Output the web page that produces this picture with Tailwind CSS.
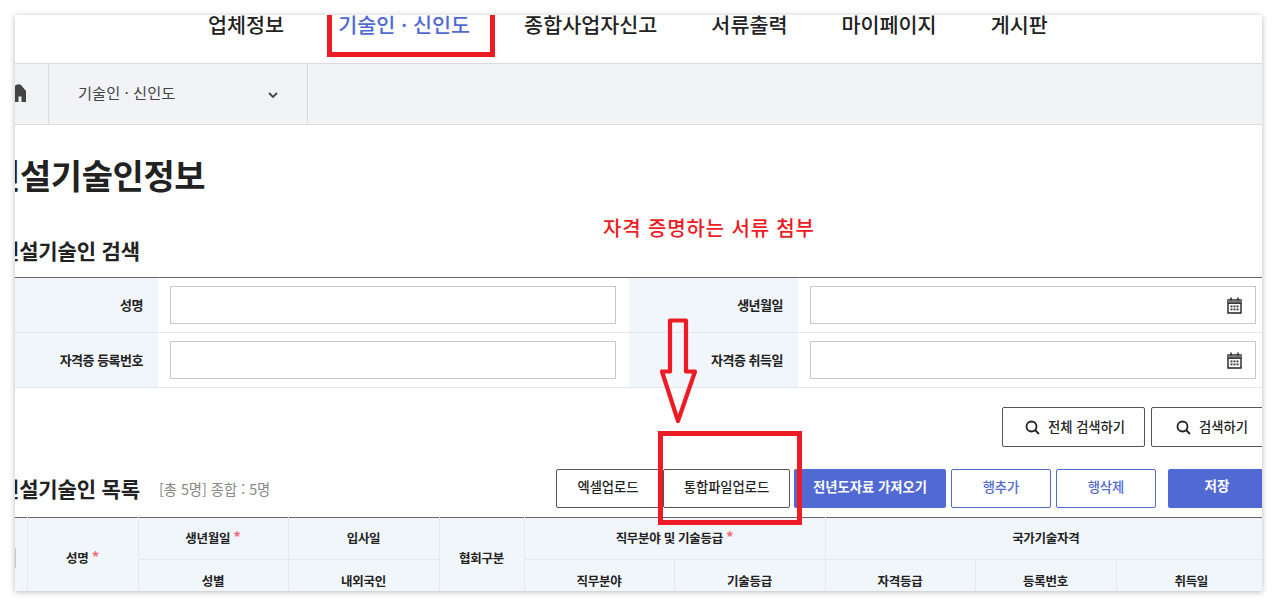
<!DOCTYPE html>
<html lang="ko">
<head>
<meta charset="utf-8">
<title>건설기술인정보</title>
<script src="https://cdn.jsdelivr.net/npm/@tailwindcss/browser@4"></script>
</head>
<body class="bg-white font-['Noto_Sans_CJK_KR','Noto_Sans',sans-serif] text-[#222]">
<div class="relative w-[1277px] h-[606px] overflow-hidden pt-[15px] pl-[15px]">
    <div class="w-[1247px] h-[576px] overflow-hidden bg-white shadow-[0_1px_6px_rgba(0,0,0,0.28)]">

        <!-- nav -->
        <div class="h-[49px] border-b border-[#dcdcdc] pb-[28px] pl-[193px] flex items-center gap-[54px] text-[20.7px] font-medium whitespace-nowrap">
            <a>업체정보</a>
            <a class="text-[#5069d3]">기술인 · 신인도</a>
            <a>종합사업자신고</a>
            <a>서류출력</a>
            <a>마이페이지</a>
            <a>게시판</a>
        </div>

        <!-- breadcrumb -->
        <div class="h-[61px] bg-[#f1f3f7] border-b border-[#dcdcdc] flex">
            <div class="w-[34px] border-r border-[#dcdcdc] flex items-center">
                <svg class="-ml-[7px] -mt-[2px]" width="19" height="18" viewBox="0 0 19 18"><path d="M1 18V7.500L8 1q3-1.500 5 0l5 6v11h-4.500v-5.500h-3V18z" fill="#444"/></svg>
            </div>
            <div class="w-[259px] border-r border-[#dcdcdc] flex items-center justify-between pl-[29px] pr-[29px] pb-[4px] text-[15.3px] text-[#444]">
                <span>기술인 · 신인도</span>
                <svg class="mt-[6px]" width="10" height="7" viewBox="0 0 10 7" fill="none"><path d="M1 1l4 4 4-4" stroke="#444" stroke-width="1.8"/></svg>
            </div>
        </div>

        <h1 class="mt-[25px] -ml-[26px] h-[50px] leading-[50px] text-[34px] font-bold tracking-[-0.4px] whitespace-nowrap">건설기술인정보</h1>

        <!-- search -->
        <h2 class="mt-[35px] -ml-[15px] h-[30px] leading-[30px] text-[21px] font-bold tracking-[-0.15px] whitespace-nowrap">건설기술인 검색</h2>
        <div class="mt-[12px] border-t border-[#666] grid grid-cols-[143px_471px_169px_464px] text-[13px] font-semibold tracking-[-0.5px]">
            <div class="h-[55px] bg-[#f1f6fb] border-b border-[#e5e5e5] flex items-center justify-end pr-[15px]">성명</div>
            <div class="h-[55px] border-b border-[#e5e5e5] flex items-center pl-[12px]">
                <div class="w-[446px] h-[38px] border border-[#c8c8c8]"></div>
            </div>
            <div class="h-[55px] bg-[#f1f6fb] border-b border-[#e5e5e5] flex items-center justify-end pr-[15px]">생년월일</div>
            <div class="h-[55px] border-b border-[#e5e5e5] flex items-center pl-[12px]">
                <div class="w-[446px] h-[38px] border border-[#c8c8c8] flex items-center justify-end pr-[13px]">
                    <svg width="15" height="17" viewBox="0 0 15 17" fill="none"><path d="M1 3h13v13H1z" stroke="#222" stroke-width="1.4"/><path d="M1 3h13v3H1z" fill="#777"/><path d="M1 6.300h13" stroke="#222" stroke-width="1.200"/><path d="M4 0.500v3M11 0.500v3" stroke="#222" stroke-width="1.400"/><path d="M3.500 8.500h2v1.800h-2zM6.500 8.500h2v1.800h-2zM9.500 8.500h2v1.800h-2zM3.500 11.500h2v1.800h-2zM6.500 11.500h2v1.800h-2zM9.500 11.500h2v1.800h-2z" fill="#333"/></svg>
                </div>
            </div>
            <div class="h-[55px] bg-[#f1f6fb] border-b border-[#e5e5e5] flex items-center justify-end pr-[15px]">자격증 등록번호</div>
            <div class="h-[55px] border-b border-[#e5e5e5] flex items-center pl-[12px]">
                <div class="w-[446px] h-[38px] border border-[#c8c8c8]"></div>
            </div>
            <div class="h-[55px] bg-[#f1f6fb] border-b border-[#e5e5e5] flex items-center justify-end pr-[15px]">자격증 취득일</div>
            <div class="h-[55px] border-b border-[#e5e5e5] flex items-center pl-[12px]">
                <div class="w-[446px] h-[38px] border border-[#c8c8c8] flex items-center justify-end pr-[13px]">
                    <svg width="15" height="17" viewBox="0 0 15 17" fill="none"><path d="M1 3h13v13H1z" stroke="#222" stroke-width="1.4"/><path d="M1 3h13v3H1z" fill="#777"/><path d="M1 6.300h13" stroke="#222" stroke-width="1.200"/><path d="M4 0.500v3M11 0.500v3" stroke="#222" stroke-width="1.400"/><path d="M3.500 8.500h2v1.800h-2zM6.500 8.500h2v1.800h-2zM9.500 8.500h2v1.800h-2zM3.500 11.500h2v1.800h-2zM6.500 11.500h2v1.800h-2zM9.500 11.500h2v1.800h-2z" fill="#333"/></svg>
                </div>
            </div>
        </div>

        <div class="mt-[19px] ml-[987px] flex gap-[6px] text-[13.3px] font-medium whitespace-nowrap">
            <button class="shrink-0 w-[143px] h-[40px] border border-[#555] rounded-[2px] flex items-center justify-center gap-[8px] pl-[3px]">
                <svg width="15" height="15" viewBox="0 0 15 15" fill="none"><circle cx="6.500" cy="6.500" r="5" stroke="#222" stroke-width="1.800"/><path d="M10 10l4 4" stroke="#222" stroke-width="1.800"/></svg>
                전체 검색하기
            </button>
            <button class="shrink-0 w-[122px] h-[40px] border border-[#555] rounded-[2px] flex items-center justify-center gap-[8px]">
                <svg width="15" height="15" viewBox="0 0 15 15" fill="none"><circle cx="6.500" cy="6.500" r="5" stroke="#222" stroke-width="1.800"/><path d="M10 10l4 4" stroke="#222" stroke-width="1.800"/></svg>
                검색하기
            </button>
        </div>

        <!-- list -->
        <div class="mt-[21px] h-[40px] flex items-center whitespace-nowrap">
            <h2 class="-ml-[15px] mt-[2px] text-[21px] font-bold tracking-[-0.15px]">건설기술인 목록</h2>
            <span class="ml-[19px] mt-[2px] text-[14.3px] text-[#888]">[총 5명] 종합 : 5명</span>
            <div class="ml-auto -mr-[4px] flex text-[13.3px] font-medium">
                <button class="w-[104px] h-[39px] pb-[2px] border border-[#555] rounded-[2px]">엑셀업로드</button>
                <button class="ml-[3px] w-[127px] h-[39px] pb-[2px] border border-[#555] rounded-[2px]">통합파일업로드</button>
                <button class="ml-[4px] w-[152px] h-[39px] pb-[2px] bg-[#5069d3] text-white font-bold rounded-[2px]">전년도자료 가져오기</button>
                <button class="ml-[5px] w-[100px] h-[39px] pb-[2px] border border-[#5069d3] text-[#5069d3] rounded-[2px]">행추가</button>
                <button class="ml-[5px] w-[100px] h-[39px] pb-[2px] border border-[#5069d3] text-[#5069d3] rounded-[2px]">행삭제</button>
                <button class="ml-[12px] w-[98px] h-[39px] pb-[5px] text-[13.5px] bg-[#5069d3] text-white font-bold rounded-[2px]">저장</button>
            </div>
        </div>

        <table class="mt-[9px] w-[1251px] table-fixed border-collapse border-t border-[#666] bg-[#f1f6fb] text-[12.5px] font-semibold tracking-[-0.3px] text-center">
            <colgroup>
                <col class="w-[12px]"><col class="w-[111px]"><col class="w-[150px]"><col class="w-[151px]"><col class="w-[85px]"><col class="w-[150px]"><col class="w-[151px]"><col class="w-[150px]"><col class="w-[141px]"><col class="w-[150px]">
            </colgroup>
            <tr class="h-[42px]">
                <td rowspan="2" class="border-r border-[#e5e8ec] p-0 pb-[4px]"><div class="-ml-[16px] w-[17px] h-[20px] border border-[#c8c8c8] bg-white"></div></td>
                <td rowspan="2" class="border-r border-[#e5e8ec] pb-[4px]">성명 <span class="text-[15px] leading-[10px] text-[#f56b75]">*</span></td>
                <td class="border-r border-b border-[#e5e8ec]">생년월일 <span class="text-[15px] leading-[10px] text-[#f56b75]">*</span></td>
                <td class="border-r border-b border-[#e5e8ec]">입사일</td>
                <td rowspan="2" class="border-r border-[#e5e8ec] pb-[4px]">협회구분</td>
                <td colspan="2" class="border-r border-b border-[#e5e8ec]">직무분야 및 기술등급 <span class="text-[15px] leading-[10px] text-[#f56b75]">*</span></td>
                <td colspan="3" class="border-b border-[#e5e8ec]">국가기술자격</td>
            </tr>
            <tr class="h-[43px]">
                <td class="border-r border-[#e5e8ec]">성별</td>
                <td class="border-r border-[#e5e8ec]">내외국인</td>
                <td class="border-r border-[#e5e8ec]">직무분야</td>
                <td class="border-r border-[#e5e8ec]">기술등급</td>
                <td class="border-r border-[#e5e8ec]">자격등급</td>
                <td class="border-r border-[#e5e8ec]">등록번호</td>
                <td>취득일</td>
            </tr>
        </table>
    </div>

    <!-- annotations over the capture -->
    <div class="absolute left-[327px] top-[15px] w-[168px] h-[42px] border-[5px] border-t-0 border-[#ed1c24]"></div>
    <div class="absolute left-[658px] top-[431px] w-[144px] h-[94px] border-[5px] border-[#ed1c24]"></div>
    <p class="absolute left-[603px] top-[215px] text-[20px] leading-[26px] font-medium tracking-[0.85px] text-[#ed1c24] whitespace-nowrap">자격 증명하는 서류 첨부</p>
    <svg class="absolute left-[655px] top-[315px]" width="46" height="114" viewBox="0 0 46 114" fill="none">
        <path d="M15 5.500h16v51h9L23 106 7 56.500h8z" stroke="#ed1c24" stroke-width="4.200" stroke-linejoin="round"/>
    </svg>
</div>
</body>
</html>
